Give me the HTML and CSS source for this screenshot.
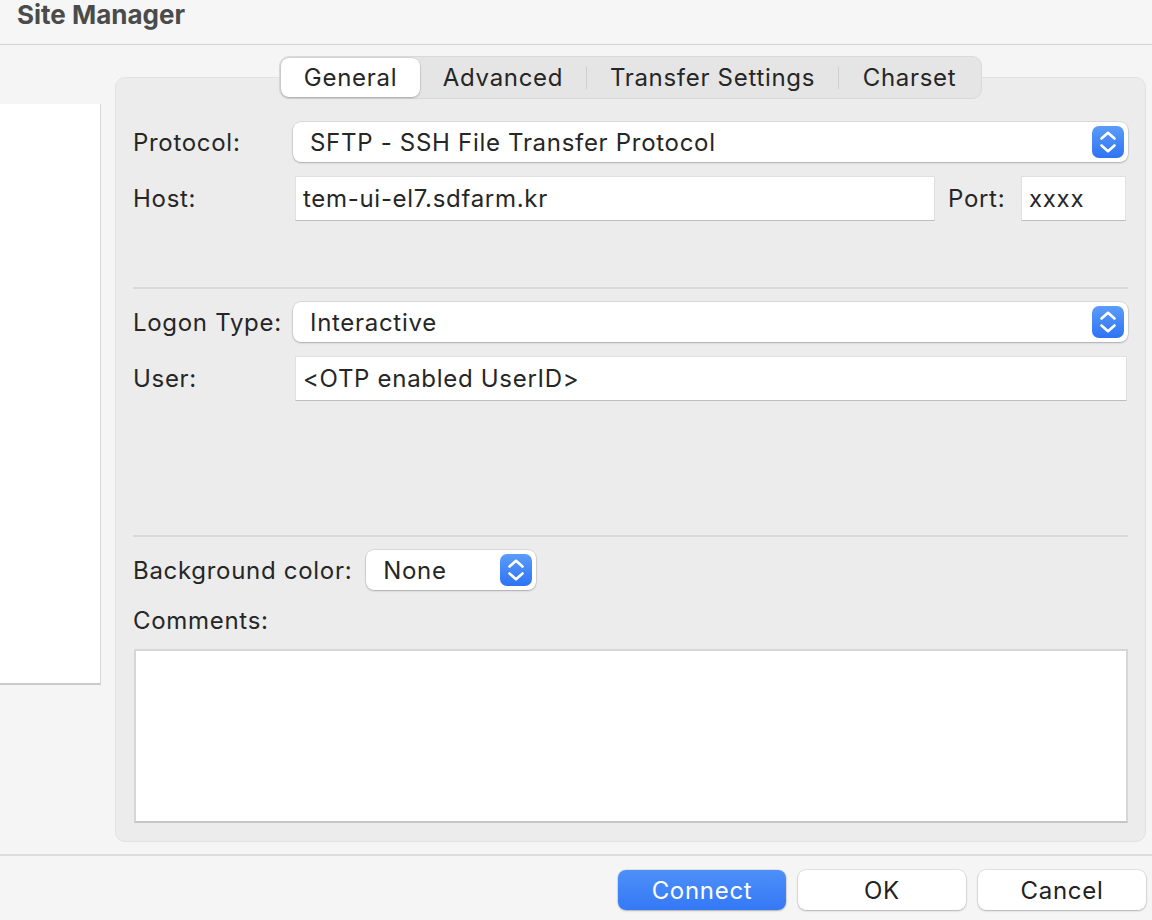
FILE: index.html
```html
<!DOCTYPE html>
<html lang="en">
<head>
<meta charset="utf-8">
<title>Site Manager</title>
<link rel="stylesheet" href="styles.css">
</head>
<body>
<div class="window">
  <header class="titlebar"><h1 class="title">Site Manager</h1></header>
  <main class="content">
    <aside class="sitelist"></aside>
    <section class="panel">
      <nav class="tabs">
        <span class="tab tab-general active">General</span>
        <span class="tab tab-advanced">Advanced</span>
        <span class="tab-sep"></span>
        <span class="tab tab-transfer">Transfer Settings</span>
        <span class="tab-sep"></span>
        <span class="tab tab-charset">Charset</span>
      </nav>
      <div class="form">
        <div class="row row-protocol">
          <label class="label">Protocol:</label>
          <div class="select select-wide">
            <span class="select-text">SFTP - SSH File Transfer Protocol</span>
            <svg class="stepper" width="32" height="32" viewBox="0 0 32 32"><defs><linearGradient id="g1" x1="0" y1="0" x2="0" y2="1"><stop offset="0" stop-color="#5b9cf9"/><stop offset="1" stop-color="#2f73f4"/></linearGradient></defs><rect width="32" height="32" rx="7" fill="url(#g1)"/><path d="M9.5 12.5 16 6.8 22.5 12.5M9.5 19.5 16 25.2 22.5 19.5" fill="none" stroke="#fff" stroke-width="2.6" stroke-linecap="round" stroke-linejoin="round"/></svg>
          </div>
        </div>
        <div class="row row-host">
          <label class="label">Host:</label>
          <div class="input input-host">tem-ui-el7.sdfarm.kr</div>
          <label class="label-port">Port:</label>
          <div class="input input-port">xxxx</div>
        </div>
        <hr class="sep sep-1">
        <div class="row row-logon">
          <label class="label">Logon Type:</label>
          <div class="select select-wide">
            <span class="select-text">Interactive</span>
            <svg class="stepper" width="32" height="32" viewBox="0 0 32 32"><defs><linearGradient id="g2" x1="0" y1="0" x2="0" y2="1"><stop offset="0" stop-color="#5b9cf9"/><stop offset="1" stop-color="#2f73f4"/></linearGradient></defs><rect width="32" height="32" rx="7" fill="url(#g2)"/><path d="M9.5 12.5 16 6.8 22.5 12.5M9.5 19.5 16 25.2 22.5 19.5" fill="none" stroke="#fff" stroke-width="2.6" stroke-linecap="round" stroke-linejoin="round"/></svg>
          </div>
        </div>
        <div class="row row-user">
          <label class="label">User:</label>
          <div class="input input-user">&lt;OTP enabled UserID&gt;</div>
        </div>
        <hr class="sep sep-2">
        <div class="row row-bg">
          <label class="label-inline">Background color:</label>
          <div class="select select-small">
            <span class="select-text">None</span>
            <svg class="stepper" width="32" height="32" viewBox="0 0 32 32"><defs><linearGradient id="g3" x1="0" y1="0" x2="0" y2="1"><stop offset="0" stop-color="#5b9cf9"/><stop offset="1" stop-color="#2f73f4"/></linearGradient></defs><rect width="32" height="32" rx="7" fill="url(#g3)"/><path d="M9.5 12.5 16 6.8 22.5 12.5M9.5 19.5 16 25.2 22.5 19.5" fill="none" stroke="#fff" stroke-width="2.6" stroke-linecap="round" stroke-linejoin="round"/></svg>
          </div>
        </div>
        <div class="comments-label">Comments:</div>
        <div class="textarea"></div>
      </div>
    </section>
  </main>
  <footer class="actions">
    <button class="btn btn-primary">Connect</button>
    <button class="btn">OK</button>
    <button class="btn">Cancel</button>
  </footer>
</div>
</body>
</html>
```
FILE: styles.css
```css
* { box-sizing: border-box; }
html, body { margin: 0; padding: 0; }
body {
  background: #f5f5f5;
  font-family: Inter, "Liberation Sans", sans-serif;
  color: #262626;
  font-size: 24px;
  letter-spacing: 0.7px;
  width: 1152px;
  height: 920px;
  overflow: hidden;
}
.window { width: 1152px; }
.titlebar {
  height: 45px;
  border-bottom: 1px solid #d4d4d4;
  background: #f6f6f6;
}
.title {
  margin: 0;
  padding-left: 17px;
  font-size: 26px;
  font-weight: 700;
  letter-spacing: 0;
  color: #4b4b4b;
  line-height: 30px;
}
.content {
  display: flex;
  height: 809px;
}
.sitelist {
  width: 101px;
  height: 581px;
  margin-top: 59px;
  background: #ffffff;
  border-right: 1px solid #d6d6d6;
  border-bottom: 2px solid #cbcbcb;
}
.panel {
  margin-left: 14px;
  margin-top: 32px;
  width: 1031px;
  height: 765px;
  background: #ececec;
  border: 1px solid #e2e2e2;
  border-radius: 10px;
  display: flex;
  flex-direction: column;
}
.tabs {
  align-self: center;
  margin-top: -22px;
  height: 43px;
  display: flex;
  align-items: center;
  background: #e5e5e5;
  border: 1px solid #d9d9d9;
  border-radius: 10px;
  padding: 0 1px;
}
.tab {
  height: 39px;
  display: flex;
  align-items: center;
  justify-content: center;
  color: #262626;
}
.tab-general { width: 139px; }
.tab-advanced { width: 166px; }
.tab-transfer { width: 251px; }
.tab-charset { width: 141px; }
.tab.active {
  background: #ffffff;
  border-radius: 8px;
  box-shadow: 0 0 0 0.5px rgba(0,0,0,0.12), 0 1px 2px rgba(0,0,0,0.22);
}
.tab-sep {
  width: 1px;
  height: 22px;
  background: #cfcfcf;
}
.form {
  padding: 23px 17px 0 17px;
  display: flex;
  flex-direction: column;
}
.row {
  display: flex;
  align-items: center;
}
.label {
  width: 160px;
  flex: none;
}
.select {
  height: 40px;
  background: #fff;
  border-radius: 8px;
  box-shadow: 0 0 0 0.5px rgba(0,0,0,0.14), 0 1px 2px rgba(0,0,0,0.22);
  display: flex;
  align-items: center;
  justify-content: space-between;
  padding: 0 4px 0 17px;
}
.select-wide { flex: 1; }
.select-text { white-space: nowrap; }
.stepper { flex: none; display: block; }
.input {
  height: 45px;
  background: #fff;
  border: 1px solid #e0e0e0;
  border-bottom-color: #bdbdbd;
  display: flex;
  align-items: center;
  padding-left: 7px;
  white-space: nowrap;
}
.row-host { margin-top: 14px; }
.input-host { margin-left: 2px; width: 640px; }
.label-port { margin-left: 13px; width: 73px; }
.input-port { width: 105px; padding-left: 7px; }
.input-user { margin-left: 2px; flex: 1; margin-right: 1px; }
.sep {
  margin: 0;
  border: 0;
  height: 2px;
  background: #d9d9d9;
}
.sep-1 { margin-top: 66px; }
.row-logon { margin-top: 13px; }
.row-user { margin-top: 14px; }
.sep-2 { margin-top: 134px; }
.row-bg { margin-top: 13px; }
.label-inline { margin-right: 14px; }
.select-small { width: 170px; }
.comments-label {
  margin-top: 16px;
  line-height: 30px;
}
.textarea {
  margin-top: 13px;
  margin-left: 1px;
  height: 174px;
  background: #fff;
  border: 2px solid #d6d6d6;
  border-bottom-color: #c4c4c4;
}
.actions {
  border-top: 2px solid #dcdcdc;
  display: flex;
  justify-content: flex-end;
  gap: 12px;
  padding: 14px 6px 0 0;
}
.btn {
  width: 168px;
  height: 40px;
  border: 0;
  border-radius: 8px;
  background: #fff;
  font-family: Inter, "Liberation Sans", sans-serif;
  font-size: 24px;
  letter-spacing: 0.7px;
  color: #222;
  box-shadow: 0 0 0 0.5px rgba(0,0,0,0.14), 0 1px 2px rgba(0,0,0,0.22);
  padding: 0;
}
.btn-primary {
  background: linear-gradient(#4d90f8, #3478f6);
  color: #fff;
}
```
